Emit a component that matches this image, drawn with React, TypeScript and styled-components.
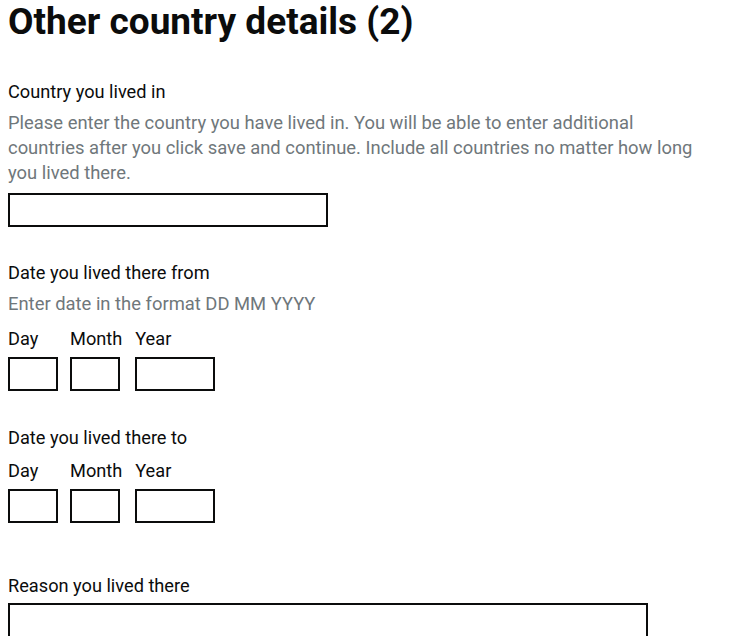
import * as React from "react";
import styled, { createGlobalStyle } from "styled-components";

const GlobalStyle = createGlobalStyle`
  html, body {
    margin: 0;
    padding: 0;
    background: #fff;
  }
  body {
    font-family: Roboto, "Liberation Sans", Arial, sans-serif;
    color: #0b0c0c;
  }
`;

const Page = styled.main`
  padding: 2px 8px 0;
  overflow: hidden;
  height: 634px;
`;

const Heading = styled.h1`
  margin: 0 0 37px;
  font-size: 37px;
  line-height: 40px;
  font-weight: 700;
  color: #0b0c0c;
`;

const FormGroup = styled.div<{ $mb?: number }>`
  margin-bottom: ${(p) => p.$mb ?? 0}px;
`;

const Label = styled.label<{ $mb?: number }>`
  display: block;
  font-size: 18.2px;
  line-height: 25px;
  color: #0b0c0c;
  margin-bottom: ${(p) => p.$mb ?? 6}px;
`;

const Hint = styled.div<{ $mb?: number }>`
  font-size: 18.4px;
  line-height: 25px;
  color: #6f777b;
  max-width: 700px;
  margin-bottom: ${(p) => p.$mb ?? 8}px;
`;

const TextInput = styled.input`
  display: block;
  box-sizing: border-box;
  width: 320px;
  height: 34px;
  margin: 0;
  padding: 4px;
  border: 2px solid #0b0c0c;
  border-radius: 0;
  font: inherit;
  font-size: 18px;
  background: #fff;
`;

const DateRow = styled.div`
  display: flex;
  align-items: flex-start;
  gap: 12px;
`;

const DateItem = styled.div`
  display: flex;
  flex-direction: column;
`;

const DateLabel = styled.label`
  font-size: 18.2px;
  line-height: 25px;
  color: #0b0c0c;
  margin-bottom: 6px;
  padding-right: 1px;
  white-space: nowrap;
`;

const DateBox = styled(TextInput)<{ $w: number }>`
  width: ${(p) => p.$w}px;
`;

const TextArea = styled.textarea`
  display: block;
  box-sizing: border-box;
  width: 640px;
  height: 120px;
  margin: 0;
  padding: 4px;
  border: 2px solid #0b0c0c;
  border-radius: 0;
  font: inherit;
  font-size: 18px;
  resize: none;
`;

const dateParts = [
  { name: "day", label: "Day", width: 50 },
  { name: "month", label: "Month", width: 50 },
  { name: "year", label: "Year", width: 80 },
];

const DateInput = ({ id }: { id: string }) => (
  <DateRow>
    {dateParts.map((part) => (
      <DateItem key={part.name}>
        <DateLabel htmlFor={`${id}-${part.name}`}>{part.label}</DateLabel>
        <DateBox id={`${id}-${part.name}`} type="text" $w={part.width} />
      </DateItem>
    ))}
  </DateRow>
);

export default function App() {
  return (
    <Page>
      <GlobalStyle />
      <Heading>Other country details (2)</Heading>

      <FormGroup $mb={33}>
        <Label htmlFor="country">Country you lived in</Label>
        <Hint>
          Please enter the country you have lived in. You will be able to enter additional
          countries after you click save and continue. Include all countries no matter how long
          you lived there.
        </Hint>
        <TextInput id="country" type="text" />
      </FormGroup>

      <FormGroup $mb={34}>
        <Label>Date you lived there from</Label>
        <Hint $mb={10}>Enter date in the format DD MM YYYY</Hint>
        <DateInput id="from" />
      </FormGroup>

      <FormGroup $mb={50}>
        <Label $mb={8}>Date you lived there to</Label>
        <DateInput id="to" />
      </FormGroup>

      <FormGroup>
        <Label htmlFor="reason" $mb={5}>
          Reason you lived there
        </Label>
        <TextArea id="reason" />
      </FormGroup>
    </Page>
  );
}
